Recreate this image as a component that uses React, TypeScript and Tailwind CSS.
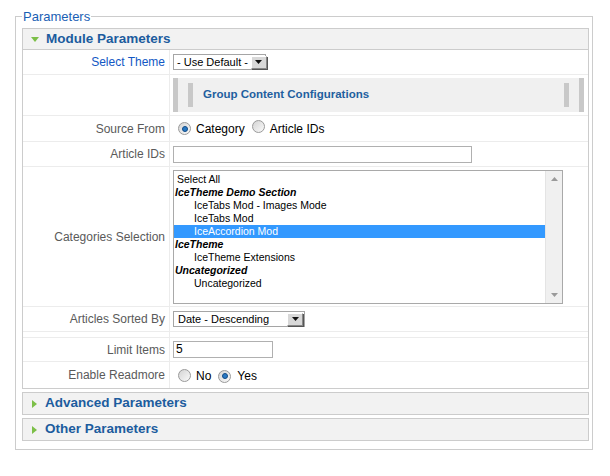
import React from "react";

const font = { fontFamily: '"Liberation Sans", Arial, sans-serif' };

function Radio({ checked }: { checked?: boolean }) {
  return (
    <span className="inline-flex w-[13px] h-[13px] items-center justify-center rounded-full border border-[#9a9a9a] bg-gradient-to-br from-[#d4d4d4] to-[#fafafa]">
      {checked && <span className="w-[6px] h-[6px] rounded-full bg-[#2a79c4] border border-[#114b86]" />}
    </span>
  );
}

function DropButton() {
  return (
    <span className="flex shrink-0 items-center justify-center w-[16px] h-[13px] bg-[#d8d8d8] border border-[#888] border-t-white border-l-white shadow-[1px_1px_0_#555]">
      <svg width="7" height="4" viewBox="0 0 7 4">
        <path d="M0 0h7L3.5 4z" fill="#111" />
      </svg>
    </span>
  );
}

function Row({ label, blue, h, children }: { label?: string; blue?: boolean; h: string; children?: React.ReactNode }) {
  return (
    <div className={`flex border-b border-[#ececec] ${h}`}>
      <div
        className={`w-[147px] shrink-0 flex items-center justify-end pr-[4px] border-r border-[#ececec] text-[12px] ${
          blue ? "text-[#1257c4]" : "text-[#5a5a5a]"
        }`}
      >
        {label}
      </div>
      <div className="flex-1 flex items-center pl-[3px]">{children}</div>
    </div>
  );
}

function Collapsed({ title }: { title: string }) {
  return (
    <div className="border border-[#ccc] bg-[#f2f2f2] h-[23px] flex items-center pl-[9px] gap-[8px] mt-[3px]">
      <svg width="5" height="8" viewBox="0 0 5 8">
        <path d="M0 0l5 4-5 4z" fill="#7cbf48" />
      </svg>
      <span className="text-[13.5px] font-bold text-[#1c5c9e]">{title}</span>
    </div>
  );
}

const items: { t: string; kind: "top" | "group" | "item"; sel?: boolean }[] = [
  { t: "Select All", kind: "top" },
  { t: "IceTheme Demo Section", kind: "group" },
  { t: "IceTabs Mod - Images Mode", kind: "item" },
  { t: "IceTabs Mod", kind: "item" },
  { t: "IceAccordion Mod", kind: "item", sel: true },
  { t: "IceTheme", kind: "group" },
  { t: "IceTheme Extensions", kind: "item" },
  { t: "Uncategorized", kind: "group" },
  { t: "Uncategorized", kind: "item" },
];

export default function App() {
  return (
    <div className="w-[610px] h-[476px] bg-white pt-[9px]" style={font}>
      <fieldset className="ml-[15px] w-[578px] border border-[#ccc] pl-[6px] pr-[3px] pt-[4px] pb-[8px]">
        <legend className="px-[1px] text-[13px] leading-[15px] text-[#1a5fb4]">Parameters</legend>

        {/* Module Parameters */}
        <div className="border border-[#ccc]">
          <div className="h-[21px] bg-[#f2f2f2] border-b border-[#ccc] flex items-center pl-[8px] gap-[7px]">
            <svg width="8" height="5" viewBox="0 0 8 5">
              <path d="M0 0h8L4 5z" fill="#7cbf48" />
            </svg>
            <span className="text-[13.5px] font-bold text-[#1c5c9e]">Module Parameters</span>
          </div>

          <Row label="Select Theme" blue h="h-[25px]">
            <div className="flex items-center gap-[3px] h-[16px] w-[93px] border border-[#a5a5a5] pl-[3px] pr-[1px] text-[11px] text-black whitespace-nowrap">
              <span className="flex-1">- Use Default -</span>
              <DropButton />
            </div>
          </Row>

          <Row h="h-[41px]">
            <div className="flex items-stretch h-[34px] w-[411px] bg-[#f0f0f0]">
              <span className="w-[5px] bg-[#c8c8c8]" />
              <span className="ml-[10px] w-[5px] h-[24px] self-center bg-[#c8c8c8]" />
              <span className="ml-[10px] flex-1 self-center text-[11.5px] font-bold text-[#1f5f9f]">
                Group Content Configurations
              </span>
              <span className="w-[5px] h-[24px] self-center bg-[#c8c8c8]" />
              <span className="ml-[10px] w-[5px] bg-[#c8c8c8]" />
            </div>
          </Row>

          <Row label="Source From" h="h-[26px]">
            <div className="flex items-center text-[12px] text-black pl-[5px]">
              <Radio checked />
              <span className="ml-[5px]">Category</span>
              <span className="ml-[7px]"><Radio /></span>
              <span className="ml-[5px]">Article IDs</span>
            </div>
          </Row>

          <Row label="Article IDs" h="h-[25px]">
            <div className="w-[299px] h-[17px] border border-[#b0b0b0]" />
          </Row>

          <Row label="Categories Selection" h="h-[140px]">
            <div className="flex w-[390px] h-[134px] border border-[#a9a9a9] text-[10.5px] leading-[13px] text-black">
              <div className="flex-1 pt-[2px]">
                {items.map((it, i) => (
                  <div
                    key={i}
                    className={`h-[13px] ${
                      it.kind === "top" ? "pl-[3px]" : it.kind === "group" ? "pl-[1px] font-bold italic" : "pl-[20px]"
                    } ${it.sel ? "bg-[#3399ff] text-white" : ""}`}
                  >
                    {it.t}
                  </div>
                ))}
              </div>
              <div className="w-[17px] bg-[#f0f0f0] border-l border-[#e4e4e4] flex flex-col items-center justify-between py-[6px]">
                <svg width="7" height="4" viewBox="0 0 7 4">
                  <path d="M3.5 0L7 4H0z" fill="#9a9a9a" />
                </svg>
                <svg width="7" height="4" viewBox="0 0 7 4">
                  <path d="M0 0h7L3.5 4z" fill="#9a9a9a" />
                </svg>
              </div>
            </div>
          </Row>

          <Row label="Articles Sorted By" h="h-[25px]">
            <div className="flex items-center h-[16px] w-[132px] border border-[#a5a5a5] pl-[4px] pr-[1px] text-[11px] text-black whitespace-nowrap">
              <span className="flex-1">Date - Descending</span>
              <DropButton />
            </div>
          </Row>

          <Row h="h-[6px]" />

          <Row label="Limit Items" h="h-[24px]">
            <div className="w-[100px] h-[17px] border border-[#b0b0b0] pl-[2px] text-[12px] leading-[15px] text-black">5</div>
          </Row>

          <div className="flex h-[26px]">
            <div className="w-[147px] shrink-0 flex items-center justify-end pr-[4px] border-r border-[#ececec] text-[12px] text-[#5a5a5a]">
              Enable Readmore
            </div>
            <div className="flex-1 flex items-center pl-[8px] text-[12px] text-black">
              <Radio />
              <span className="ml-[5px] mt-[2px]">No</span>
              <span className="ml-[7px]"><Radio checked /></span>
              <span className="ml-[6px] mt-[2px]">Yes</span>
            </div>
          </div>
        </div>

        <Collapsed title="Advanced Parameters" />
        <Collapsed title="Other Parameters" />
      </fieldset>
    </div>
  );
}
